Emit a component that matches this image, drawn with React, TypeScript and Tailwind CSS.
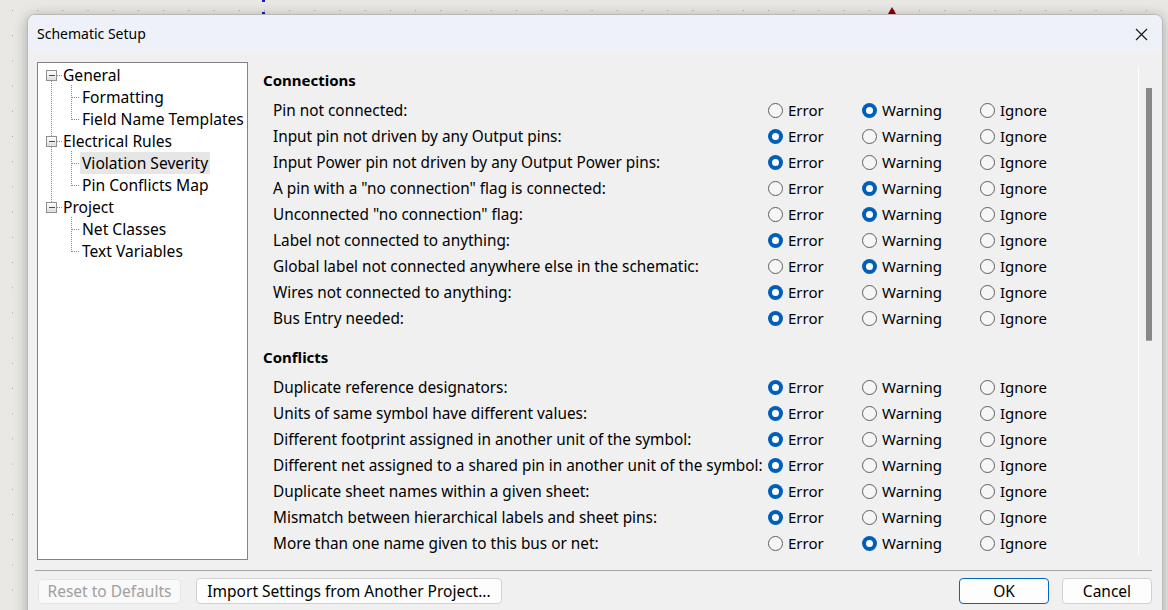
import React from "react";

type Sev = "E" | "W" | "I";

const connections: [string, Sev][] = [
  ["Pin not connected:", "W"],
  ["Input pin not driven by any Output pins:", "E"],
  ["Input Power pin not driven by any Output Power pins:", "E"],
  ['A pin with a "no connection" flag is connected:', "W"],
  ['Unconnected "no connection" flag:', "W"],
  ["Label not connected to anything:", "E"],
  ["Global label not connected anywhere else in the schematic:", "W"],
  ["Wires not connected to anything:", "E"],
  ["Bus Entry needed:", "E"],
];

const conflicts: [string, Sev][] = [
  ["Duplicate reference designators:", "E"],
  ["Units of same symbol have different values:", "E"],
  ["Different footprint assigned in another unit of the symbol:", "E"],
  ["Different net assigned to a shared pin in another unit of the symbol:", "E"],
  ["Duplicate sheet names within a given sheet:", "E"],
  ["Mismatch between hierarchical labels and sheet pins:", "E"],
  ["More than one name given to this bus or net:", "W"],
];

function Radio({ on }: { on: boolean }) {
  return on ? (
    <span className="w-[15px] h-[15px] rounded-full bg-[#005fb8] flex items-center justify-center shrink-0">
      <span className="w-[7px] h-[7px] rounded-full bg-white" />
    </span>
  ) : (
    <span className="w-[15px] h-[15px] rounded-full border border-[#5e5e5e] bg-[#f6f6f6] shrink-0" />
  );
}

function Row({ label, sev }: { label: string; sev: Sev }) {
  return (
    <div className="flex items-center h-[26px] pl-[10px]">
      <div className="w-[495px] shrink-0 whitespace-nowrap text-[15.35px]">{label}</div>
      <div className="w-[94px] flex items-center gap-[5px]">
        <Radio on={sev === "E"} />
        <span>Error</span>
      </div>
      <div className="w-[118px] flex items-center gap-[5px]">
        <Radio on={sev === "W"} />
        <span>Warning</span>
      </div>
      <div className="flex items-center gap-[5px]">
        <Radio on={sev === "I"} />
        <span>Ignore</span>
      </div>
    </div>
  );
}

const tree: { label: string; level: number; selected?: boolean }[] = [
  { label: "General", level: 0 },
  { label: "Formatting", level: 1 },
  { label: "Field Name Templates", level: 1 },
  { label: "Electrical Rules", level: 0 },
  { label: "Violation Severity", level: 1, selected: true },
  { label: "Pin Conflicts Map", level: 1 },
  { label: "Project", level: 0 },
  { label: "Net Classes", level: 1 },
  { label: "Text Variables", level: 1 },
];

function TreeLines() {
  const cy = (i: number) => 12 + 22 * i + 0.5;
  const parents = [0, 3, 6];
  const dots = "#8a8a8a";
  return (
    <svg className="absolute left-0 top-0" width="210" height="220" shapeRendering="crispEdges">
      <defs>
        <linearGradient id="box" x1="0" y1="0" x2="0" y2="1">
          <stop offset="0" stopColor="#ffffff" />
          <stop offset="1" stopColor="#dcdcdc" />
        </linearGradient>
      </defs>
      <line x1="13.5" y1={cy(0) + 5} x2="13.5" y2={cy(6) - 5} stroke={dots} strokeDasharray="1 1" />
      {parents.map((p) => (
        <g key={p}>
          <line x1="33.5" y1={cy(p) + 9} x2="33.5" y2={cy(p + 2)} stroke={dots} strokeDasharray="1 1" />
          <line x1="34" y1={cy(p + 1)} x2="42" y2={cy(p + 1)} stroke={dots} strokeDasharray="1 1" />
          <line x1="34" y1={cy(p + 2)} x2="42" y2={cy(p + 2)} stroke={dots} strokeDasharray="1 1" />
          <line x1="19" y1={cy(p)} x2="24" y2={cy(p)} stroke={dots} strokeDasharray="1 1" />
          <rect x="8.5" y={cy(p) - 5} width="10" height="10" fill="url(#box)" stroke="#8f8f8f" />
          <line x1="10.5" y1={cy(p)} x2="17" y2={cy(p)} stroke="#3b4a8c" />
        </g>
      ))}
    </svg>
  );
}

export default function App() {
  return (
    <div
      className="relative w-[1168px] h-[610px] overflow-hidden bg-[#e9e8e4] text-[15px] leading-[22px] text-black"
      style={{ fontFamily: '"Noto Sans", "Open Sans", sans-serif' }}
    >
      <svg className="absolute inset-0" width="1168" height="610">
        <defs>
          <pattern id="dots" x="12" y="10" width="25.2" height="25.2" patternUnits="userSpaceOnUse">
            <rect x="0" y="0" width="1" height="1" fill="#a3a3a3" />
          </pattern>
        </defs>
        <rect width="1168" height="610" fill="url(#dots)" />
        <rect x="262" y="0" width="3" height="2" fill="#1a1aa8" />
        <rect x="262" y="12" width="3" height="2" fill="#1a1aa8" />
        <polygon points="888,14 892,7 896,14" fill="#8b0000" />
      </svg>

      <div className="absolute left-[27px] top-[14px] w-[1136px] h-[610px] rounded-t-[8px] border border-[#b9b9b9] bg-[#f0f0f0] shadow-[0_2px_14px_rgba(0,0,0,0.28)] flex flex-col overflow-hidden">
        <div className="h-[37px] shrink-0 bg-[#eef2f8] flex items-center justify-between pl-[9px] pr-[14px] pt-[1px]">
          <span className="text-[14px]">Schematic Setup</span>
          <svg width="13" height="13" viewBox="0 0 13 13">
            <path d="M1 1 L12 12 M12 1 L1 12" stroke="#1a1a1a" strokeWidth="1.2" />
          </svg>
        </div>

        <div className="flex pt-[10px] pl-[9px] pr-[4px]">
          <div className="relative w-[211px] h-[498px] shrink-0 bg-white border border-[#838383] pt-px text-[15.6px]">
            <TreeLines />
            {tree.map((t) => (
              <div key={t.label} className={`h-[22px] flex items-center ${t.level === 0 ? "pl-[23px]" : "pl-[42px]"}`}>
                <span className={`px-[2px] h-[22px] flex items-center whitespace-nowrap ${t.selected ? "bg-[#e6e6e6]" : ""}`}>
                  {t.label}
                </span>
              </div>
            ))}
          </div>

          <div className="flex-1 flex h-[498px] ml-[5px] overflow-hidden">
            <div className="flex-1 pt-[7px] pl-[10px] overflow-hidden">
              <div className="h-[22px] flex items-center font-bold">Connections</div>
              <div className="mt-[6px]">
                {connections.map(([l, s]) => (
                  <Row key={l} label={l} sev={s} />
                ))}
              </div>
              <div className="mt-[15px] h-[22px] flex items-center font-bold">Conflicts</div>
              <div className="mt-[6px]">
                {conflicts.map(([l, s]) => (
                  <Row key={l} label={l} sev={s} />
                ))}
              </div>
            </div>
            <div className="w-px bg-white my-[5px]" />
            <div className="w-[19px] pt-[26px] pl-[7px]">
              <div className="w-[6px] h-[253px] bg-[#888888] border-b border-[#a8a8a8]" />
            </div>
          </div>
        </div>

        <div className="mt-[10px] mx-[7px] mr-[10px] h-px bg-[#a6a6a6]" />

        <div className="flex items-center pt-[7px] pl-[10px] pr-[10px] text-[15.5px]">
          <button className="w-[143px] h-[25px] rounded-[4px] border border-[#e6e6e6] bg-[#f9f9f9] text-[#a0a0a0] flex items-center justify-center">
            Reset to Defaults
          </button>
          <button className="ml-[15px] w-[306px] h-[26px] rounded-[4px] border border-[#d0d0d0] bg-[#fdfdfd] flex items-center justify-center">
            Import Settings from Another Project...
          </button>
          <div className="flex-1" />
          <button className="w-[90px] h-[26px] rounded-[4px] border border-[#0067c0] bg-[#fdfdfd] flex items-center justify-center">
            OK
          </button>
          <button className="ml-[13px] w-[90px] h-[26px] rounded-[4px] border border-[#d0d0d0] bg-[#fdfdfd] flex items-center justify-center">
            Cancel
          </button>
        </div>
      </div>
    </div>
  );
}
